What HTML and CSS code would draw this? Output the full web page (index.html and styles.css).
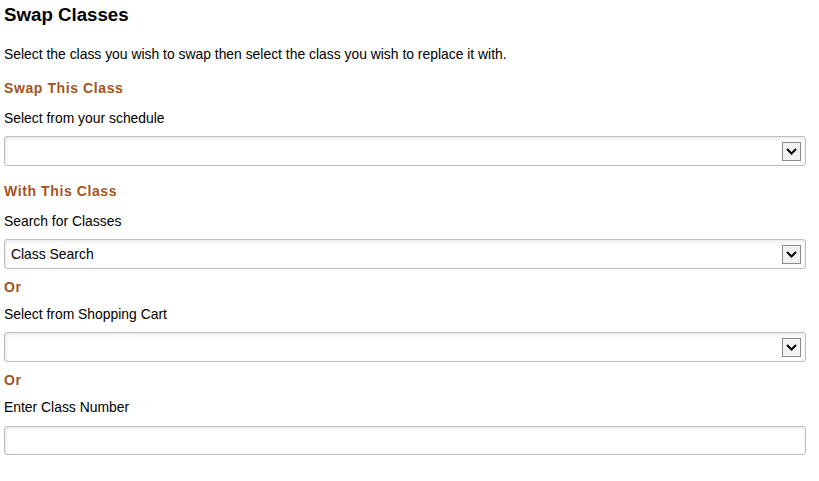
FILE: index.html
```html
<!DOCTYPE html>
<html lang="en">
<head>
    <meta charset="UTF-8">
    <meta name="viewport" content="width=device-width, initial-scale=1.0">
    <title>Swap Classes</title>
    <link rel="stylesheet" href="styles.css">
</head>
<body>
    <div class="page">
        <h1 class="page-title">Swap Classes</h1>
        <p class="intro">Select the class you wish to swap then select the class you wish to replace it with.</p>

        <h2 class="section-title">Swap This Class</h2>
        <p class="field-label">Select from your schedule</p>
        <div class="dropdown">
            <span class="dropdown-value"></span>
            <span class="dropdown-arrow">
                <svg width="11" height="7" viewBox="0 0 11 7"><path d="M1 1 L5.5 5.5 L10 1" fill="none" stroke="#000" stroke-width="2"/></svg>
            </span>
        </div>

        <h2 class="section-title">With This Class</h2>
        <p class="field-label">Search for Classes</p>
        <div class="dropdown">
            <span class="dropdown-value">Class Search</span>
            <span class="dropdown-arrow">
                <svg width="11" height="7" viewBox="0 0 11 7"><path d="M1 1 L5.5 5.5 L10 1" fill="none" stroke="#000" stroke-width="2"/></svg>
            </span>
        </div>

        <h3 class="or-title">Or</h3>
        <p class="field-label after-or">Select from Shopping Cart</p>
        <div class="dropdown">
            <span class="dropdown-value"></span>
            <span class="dropdown-arrow">
                <svg width="11" height="7" viewBox="0 0 11 7"><path d="M1 1 L5.5 5.5 L10 1" fill="none" stroke="#000" stroke-width="2"/></svg>
            </span>
        </div>

        <h3 class="or-title">Or</h3>
        <p class="field-label after-or">Enter Class Number</p>
        <div class="text-input"></div>
    </div>
</body>
</html>
```

FILE: styles.css
```css
body {
    margin: 0;
    padding: 0;
    font-family: "Liberation Sans", Arial, sans-serif;
    color: #000;
    background-color: #fff;
}
.page {
    padding: 4px 13px 20px 4px;
}
.page-title {
    font-size: 18.7px;
    line-height: 22px;
    font-weight: bold;
    margin: 0;
}
.intro {
    font-size: 13.9px;
    line-height: 16px;
    margin: 20px 0 0 0;
}
.section-title {
    color: #a5541e;
    font-size: 14px;
    line-height: 18px;
    font-weight: bold;
    letter-spacing: 0.6px;
    margin: 16px 0 0 0;
}
.intro + .section-title {
    margin-top: 17px;
}
.or-title {
    color: #a5541e;
    font-size: 14px;
    line-height: 18px;
    font-weight: bold;
    letter-spacing: 0.6px;
    margin: 9px 0 0 0;
}
.field-label {
    font-size: 13.9px;
    line-height: 16px;
    margin: 13px 0 0 0;
}
.field-label.after-or {
    margin-top: 10px;
}
.dropdown, .text-input {
    box-sizing: border-box;
    height: 30px;
    margin-top: 10px;
    border: 1px solid #bdbdbd;
    border-radius: 3px;
    background-color: #fff;
    box-shadow: inset 0 2px 4px rgba(0, 0, 0, 0.07), inset 2px 0 3px rgba(0, 0, 0, 0.04);
}
.text-input {
    height: 29px;
    margin-top: 11px;
}
.dropdown {
    display: flex;
    align-items: center;
    justify-content: space-between;
    padding: 0 4px 0 6px;
}
.dropdown-value {
    font-size: 13.9px;
}
.dropdown-arrow {
    box-sizing: border-box;
    width: 19px;
    height: 19px;
    border: 1px solid #8a8a8a;
    background-color: #f2f2f2;
    display: flex;
    align-items: center;
    justify-content: center;
}
```
